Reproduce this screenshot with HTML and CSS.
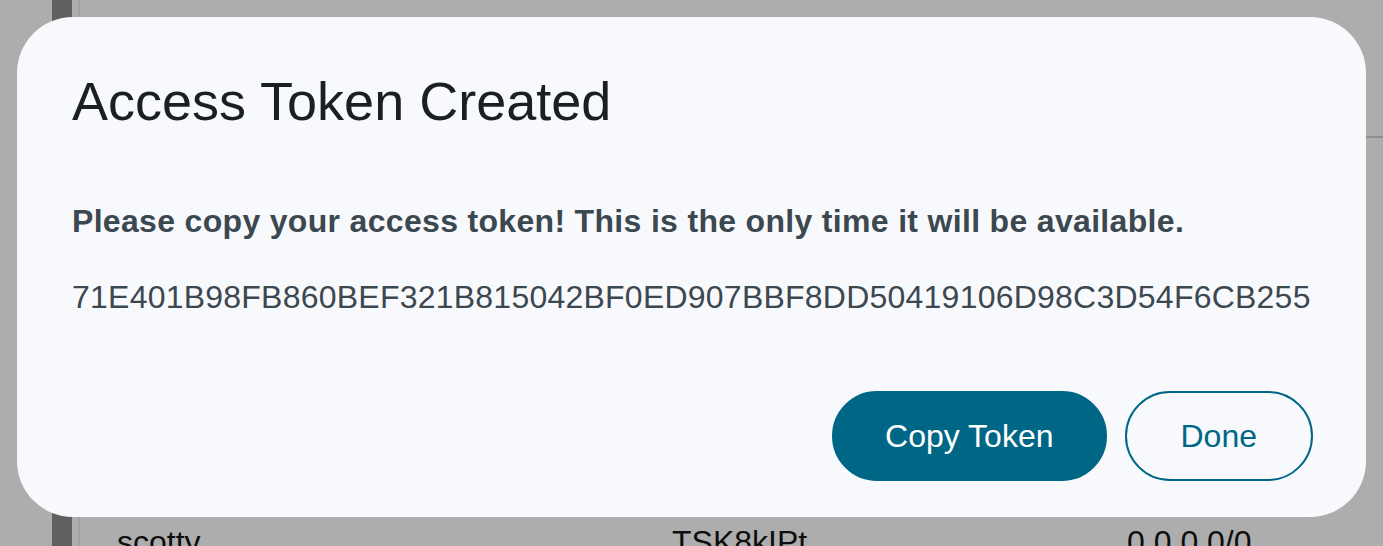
FILE: index.html
```html
<!DOCTYPE html>
<html lang="en">
<head>
<meta charset="utf-8">
<title>Access Token Created</title>
<link rel="stylesheet" href="styles.css">
</head>
<body>
<div class="page">
  <div class="rail"></div>
  <div class="rule"></div>
  <div class="content">
    <div class="head-row"></div>
    <div class="spacer"></div>
    <div class="data-row">
      <span class="cell cell-user">scotty</span>
      <span class="cell cell-token">TSK8kIPt</span>
      <span class="cell cell-ip">0.0.0.0/0</span>
    </div>
  </div>
</div>

<div class="modal" role="dialog" aria-labelledby="modal-title">
  <h1 class="modal-title" id="modal-title">Access Token Created</h1>
  <p class="modal-warning">Please copy your access token! This is the only time it will be available.</p>
  <p class="modal-token">71E401B98FB860BEF321B815042BF0ED907BBF8DD50419106D98C3D54F6CB255</p>
  <div class="modal-actions">
    <button class="btn btn-primary" type="button">Copy Token</button>
    <button class="btn btn-outline" type="button">Done</button>
  </div>
</div>
</body>
</html>
```

FILE: styles.css
```css
html, body {
  margin: 0;
  padding: 0;
}

body {
  width: 1383px;
  height: 546px;
  overflow: hidden;
  background: #adadad;
  font-family: "Liberation Sans", Arial, sans-serif;
  position: relative;
}

.page {
  display: flex;
  height: 546px;
}

.rail {
  width: 20px;
  margin-left: 52px;
  background: #606060;
}

.rule {
  width: 2px;
  margin-left: 6px;
  background: #a2a2a2;
}

.content {
  flex: 1;
  display: flex;
  flex-direction: column;
}

.head-row {
  height: 136px;
  border-bottom: 2px solid #8f8f8f;
}

.spacer {
  flex: 1;
}

.data-row {
  height: 24px;
  display: flex;
  font-size: 32px;
  line-height: 40px;
  color: #0e0e0e;
  overflow: visible;
}

.cell {
  display: block;
  white-space: nowrap;
}

.cell-user {
  margin-left: 37px;
  width: 555px;
}

.cell-token {
  width: 455px;
}

.modal {
  position: absolute;
  left: 17px;
  top: 17px;
  width: 1349px;
  height: 500px;
  box-sizing: border-box;
  padding: 52px 53px 36px 55px;
  background: #f8f9fd;
  border-radius: 56px;
  display: flex;
  flex-direction: column;
}

.modal-title {
  margin: 0;
  font-size: 54px;
  line-height: 64px;
  font-weight: 400;
  color: #1c1f22;
}

.modal-warning {
  margin: 68px 0 0;
  font-size: 32px;
  line-height: 40px;
  font-weight: 700;
  letter-spacing: 0.32px;
  color: #3c4850;
}

.modal-token {
  margin: 36px 0 0;
  font-size: 32px;
  line-height: 40px;
  font-weight: 400;
  letter-spacing: 0.23px;
  color: #3c4850;
}

.modal-actions {
  margin-top: auto;
  display: flex;
  justify-content: flex-end;
  gap: 18px;
}

.btn {
  height: 90px;
  box-sizing: border-box;
  border-radius: 45px;
  border: 2px solid #006685;
  font-family: "Liberation Sans", Arial, sans-serif;
  font-size: 32px;
  cursor: pointer;
}

.btn-primary {
  padding: 0 51px;
  background: #006685;
  color: #ffffff;
}

.btn-outline {
  padding: 0 54px;
  background: transparent;
  color: #006685;
}
```
